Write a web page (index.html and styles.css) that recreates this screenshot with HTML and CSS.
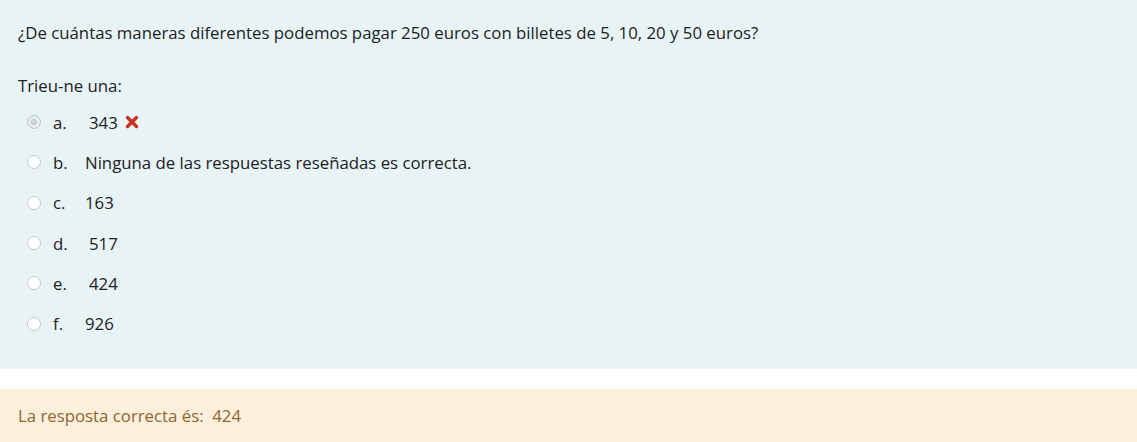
FILE: index.html
```html
<!DOCTYPE html>
<html lang="es">
<head>
<meta charset="utf-8">
<link rel="stylesheet" href="styles.css">
</head>
<body>
<div class="formulation">
  <p class="qtext">¿De cuántas maneras diferentes podemos pagar 250 euros con billetes de 5, 10, 20 y 50 euros?</p>
  <p class="prompt">Trieu-ne una:</p>
  <div class="answers">
    <div class="opt"><span class="radio checked"></span><span class="num">a.</span><span class="txt pad">343</span><svg class="cross" viewBox="0 0 14 14" width="14" height="14"><path d="M2.5 2.5 L11.5 11.5 M11.5 2.5 L2.5 11.5" stroke="#ca3120" stroke-width="3.4" stroke-linecap="round"/></svg></div>
    <div class="opt"><span class="radio"></span><span class="num">b.</span><span class="txt">Ninguna de las respuestas reseñadas es correcta.</span></div>
    <div class="opt"><span class="radio"></span><span class="num">c.</span><span class="txt">163</span></div>
    <div class="opt"><span class="radio"></span><span class="num">d.</span><span class="txt pad">517</span></div>
    <div class="opt"><span class="radio"></span><span class="num">e.</span><span class="txt pad">424</span></div>
    <div class="opt"><span class="radio"></span><span class="num">f.</span><span class="txt">926</span></div>
  </div>
</div>
<div class="outcome">La resposta correcta és:&nbsp; 424</div>
</body>
</html>
```
FILE: styles.css
```css
html, body { margin: 0; padding: 0; background: #fff; }
body {
  font-family: "Open Sans", "Noto Sans", sans-serif;
  font-size: 16.8px;
  color: #1d2125;
}
.formulation {
  background: #e7f3f5;
  height: 369px;
  padding: 0 18px;
  box-sizing: border-box;
  overflow: hidden;
}
.qtext { margin: 0; padding-top: 22px; line-height: 22px; }
.prompt { margin: 31px 0 0; line-height: 22px; }
.answers { margin-top: 5px; display: flex; flex-direction: column; }
.opt { display: flex; align-items: center; height: 40.3px; }
.radio {
  width: 12px; height: 12px; border-radius: 50%;
  border: 1px solid #c6cdd0; background: #fdfefe;
  margin-left: 9px; margin-right: 12px; box-sizing: content-box;
  flex: none;
}
.radio.checked { background: #cfd3d5; border-color: #c4c9cc; box-shadow: inset 0 0 0 2.5px #eceff0; }
.num { width: 32px; flex: none; }
.txt.pad { padding-left: 4px; }
.cross { margin-left: 7px; }
.outcome {
  margin-top: 20px;
  background: #fcefdc;
  color: #8e662e;
  height: 53px;
  line-height: 53px;
  padding: 0 18px;
}
```
